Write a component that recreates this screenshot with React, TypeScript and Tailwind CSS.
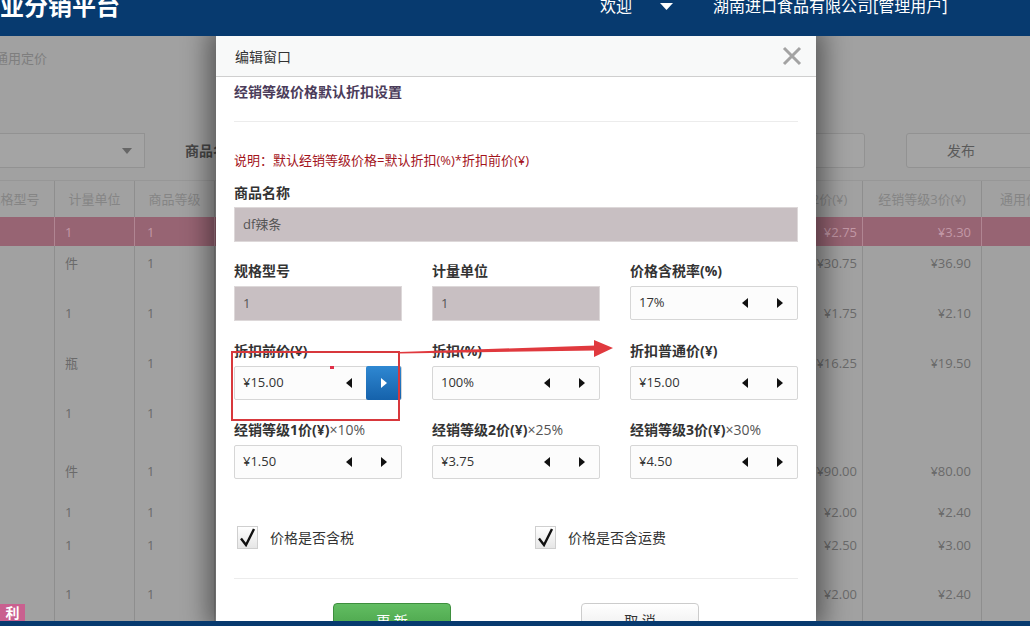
import React from "react";

const rows = [
  { h: 29, u: "1", g: "1", a: "¥2.75", b: "¥3.30", hl: true },
  { h: 50, u: "件", g: "1", a: "¥30.75", b: "¥36.90" },
  { h: 50, u: "1", g: "1", a: "¥1.75", b: "¥2.10" },
  { h: 50, u: "瓶", g: "1", a: "¥16.25", b: "¥19.50" },
  { h: 58, u: "1", g: "1", a: "", b: "" },
  { h: 41, u: "件", g: "1", a: "¥90.00", b: "¥80.00" },
  { h: 33, u: "1", g: "1", a: "¥2.00", b: "¥2.40" },
  { h: 49, u: "1", g: "1", a: "¥2.50", b: "¥3.00" },
  { h: 49, u: "1", g: "1", a: "¥2.00", b: "¥2.40" },
];

function Tri({ dir, color = "#111" }: { dir: "left" | "right"; color?: string }) {
  return (
    <svg width="6" height="10" viewBox="0 0 6 10">
      <path d={dir === "left" ? "M6 0 L0 5 L6 10Z" : "M0 0 L6 5 L0 10Z"} fill={color} />
    </svg>
  );
}

function Spinner({ value, active }: { value: string; active?: boolean }) {
  return (
    <div className="flex h-[34px] items-center rounded-[2px] border border-[#d6d6d6] bg-[#fcfcfc]">
      <span className="flex-1 pl-[8px] text-[13px] text-[#333]">{value}</span>
      <span className="flex h-full w-[35px] items-center justify-center">
        <Tri dir="left" />
      </span>
      {active ? (
        <span className="flex h-[34px] w-[35px] items-center justify-center rounded-[2px] bg-linear-to-b from-[#2f88d2] to-[#1562ab]">
          <Tri dir="right" color="#fff" />
        </span>
      ) : (
        <span className="flex h-full w-[35px] items-center justify-center">
          <Tri dir="right" />
        </span>
      )}
    </div>
  );
}

function Disabled({ value }: { value: string }) {
  return (
    <div className="flex h-[35px] items-center border border-[#ddd8d9] bg-[#c8bfc2] pl-[8px] text-[13px] text-[#555]">
      {value}
    </div>
  );
}

function Label({ children }: { children: React.ReactNode }) {
  return <div className="h-[20px] text-[14px] leading-[20px] font-bold text-[#333]">{children}</div>;
}

function Check({ label }: { label: string }) {
  return (
    <div className="flex items-center gap-[12px]">
      <div className="flex h-[23px] w-[21px] items-center justify-center border border-[#cfcfcf] bg-linear-to-b from-white to-[#e6e6e6]">
        <svg width="17" height="19" viewBox="0 0 17 19">
          <path d="M2 10.5 L7 17 L15 1" fill="none" stroke="#111" strokeWidth="2.4" />
        </svg>
      </div>
      <span className="text-[14px] text-[#333]">{label}</span>
    </div>
  );
}

function Modal() {
  return (
    <div className="absolute top-0 left-[216px] h-[585px] w-[600px] overflow-hidden bg-white shadow-[0_0_24px_8px_rgba(0,0,0,0.45)] font-['Open_Sans','Noto_Sans_CJK_SC',sans-serif]">
      {/* title bar */}
      <div className="flex h-[41px] items-center justify-between border-b border-[#cfcfcf] bg-[#f8f9f9] pr-[14px] pl-[19px]">
        <span className="text-[14px] text-[#333]">编辑窗口</span>
        <svg width="20" height="20" viewBox="0 0 20 20">
          <path d="M2 2 L18 18 M18 2 L2 18" stroke="#a3a3a3" strokeWidth="3" />
        </svg>
      </div>

      <div className="px-[18px]">
        <div className="mt-[5px] h-[20px] text-[14px] leading-[20px] font-bold text-[#4b3c5a]">经销等级价格默认折扣设置</div>
        <div className="mt-[19px] h-px bg-[#ececec]" />
        <div className="mt-[29px] h-[18px] text-[13px] leading-[18px] text-[#a3141c]">
          说明：默认经销等级价格=默认折扣(%)*折扣前价(¥)
        </div>

        <div className="mt-[14px]">
          <Label>商品名称</Label>
          <div className="mt-[4px]">
            <Disabled value="df辣条" />
          </div>
        </div>

        <div className="grid grid-cols-3 gap-x-[30px]">
          <div className="mt-[19px]">
            <Label>规格型号</Label>
            <div className="mt-[5px]"><Disabled value="1" /></div>
          </div>
          <div className="mt-[19px]">
            <Label>计量单位</Label>
            <div className="mt-[5px]"><Disabled value="1" /></div>
          </div>
          <div className="mt-[19px]">
            <Label>价格含税率(%)</Label>
            <div className="mt-[5px]"><Spinner value="17%" /></div>
          </div>

          <div className="mt-[20px]">
            <Label>折扣前价(¥)</Label>
            <div className="mt-[5px]"><Spinner value="¥15.00" active /></div>
          </div>
          <div className="mt-[20px]">
            <Label>折扣(%)</Label>
            <div className="mt-[5px]"><Spinner value="100%" /></div>
          </div>
          <div className="mt-[20px]">
            <Label>折扣普通价(¥)</Label>
            <div className="mt-[5px]"><Spinner value="¥15.00" /></div>
          </div>

          <div className="mt-[20px]">
            <Label>经销等级1价(¥)<span className="font-normal text-[#555]">×10%</span></Label>
            <div className="mt-[5px]"><Spinner value="¥1.50" /></div>
          </div>
          <div className="mt-[20px]">
            <Label>经销等级2价(¥)<span className="font-normal text-[#555]">×25%</span></Label>
            <div className="mt-[5px]"><Spinner value="¥3.75" /></div>
          </div>
          <div className="mt-[20px]">
            <Label>经销等级3价(¥)<span className="font-normal text-[#555]">×30%</span></Label>
            <div className="mt-[5px]"><Spinner value="¥4.50" /></div>
          </div>
        </div>

        <div className="mt-[47px] flex">
          <div className="ml-[3px] w-[298px]">
            <Check label="价格是否含税" />
          </div>
          <Check label="价格是否含运费" />
        </div>

        <div className="mt-[29px] h-px bg-[#ececec]" />

        <div className="mt-[24px] flex justify-center gap-[130px]">
          <button className="h-[34px] w-[118px] rounded-[4px] border border-[#3e8f3e] bg-linear-to-b from-[#62bd62] to-[#449d44] text-[14px] text-white">
            更 新
          </button>
          <button className="h-[34px] w-[118px] rounded-[4px] border border-[#ccc] bg-linear-to-b from-white to-[#eaeaea] text-[14px] text-[#333]">
            取 消
          </button>
        </div>
      </div>

      {/* annotations drawn on the screenshot */}
      <div className="absolute top-[315px] left-[15px] h-[70px] w-[169px] border-2 border-[#d8383c]" />
      <div className="absolute top-[330px] left-[114px] h-[3px] w-[4px] bg-[#e03048]" />
      <svg className="absolute top-[300px] left-[181px]" width="220" height="25" viewBox="0 0 220 25">
        <path d="M2 16 L199 9.5 L199 14.5 L2 17.5Z" fill="#e0393e" />
        <path d="M197 4 L216 12 L197 21Z" fill="#e0393e" />
      </svg>
    </div>
  );
}

export default function App() {
  const cell = "shrink-0 border-r border-[#8e8e8e]";
  return (
    <div className="relative h-[626px] w-[1030px] overflow-hidden bg-[#a2a2a2] font-['Open_Sans','Noto_Sans_CJK_SC',sans-serif]">
      {/* top bar */}
      <div className="flex h-[36px] overflow-hidden bg-[#073a6f] text-white">
        <div className="-mt-[7px] w-[600px] text-[24px] leading-[26px] font-bold">业分销平台</div>
        <div className="-mt-[4px] flex h-[20px] items-center text-[16px] leading-[20px]">
          <span>欢迎</span>
          <svg className="ml-[28px]" width="13" height="7" viewBox="0 0 13 7">
            <path d="M0 0 L13 0 L6.5 7Z" fill="#fff" />
          </svg>
          <span className="ml-[40px]">湖南进口食品有限公司[管理用户]</span>
        </div>
      </div>

      {/* page behind the dialog, dimmed by the overlay */}
      <div className="relative h-[585px] overflow-hidden bg-[#a1a1a1]">
        <div className="-ml-[5px] h-[97px] pt-[13px] text-[13px] leading-[18px] text-[#7e7e7e]">通用定价</div>

        <div className="flex h-[35px] items-stretch">
          <div className="-ml-[20px] flex w-[165px] shrink-0 items-center justify-end border border-[#929292] bg-[#a4a4a4] pr-[12px]">
            <svg width="10" height="6" viewBox="0 0 10 6">
              <path d="M0 0 L10 0 L5 6Z" fill="#666" />
            </svg>
          </div>
          <div className="flex w-[545px] shrink-0 items-center pl-[40px] text-[14px] font-bold text-[#474747]">商品名称</div>
          <div className="w-[175px] shrink-0 rounded-[3px] border border-[#929292] bg-[#a4a4a4]" />
          <div className="ml-[41px] flex w-[140px] shrink-0 items-center rounded-[3px] border border-[#929292] bg-[#a4a4a4] pl-[40px] text-[14px] text-[#5a5a5a]">
            发布
          </div>
        </div>

        <div className="mt-[12px] border-t border-[#979797] text-[13px] leading-[18px] text-[#6a6a6a]">
          <div className="flex h-[36px] items-center text-[#858585]">
            <div className={`${cell} -ml-[27px] flex h-full w-[82px] items-center justify-center`}>规格型号</div>
            <div className={`${cell} flex h-full w-[80px] items-center justify-center`}>计量单位</div>
            <div className={`${cell} flex h-full w-[80px] items-center justify-center`}>商品等级</div>
            <div className={`${cell} h-full w-[530px]`} />
            <div className={`${cell} flex h-full w-[118px] items-center justify-center`}>经销等级2价(¥)</div>
            <div className={`${cell} flex h-full w-[119px] items-center justify-center`}>经销等级3价(¥)</div>
            <div className="flex h-full w-[90px] shrink-0 items-center justify-center">通用价(¥)</div>
          </div>
          {rows.map((r, i) => {
            const c = r.hl ? "shrink-0 border-r border-[#b08592]" : cell;
            const box = r.hl ? "flex items-center" : "pt-[8px]";
            return (
              <div
                key={i}
                className={r.hl ? "flex bg-[#976473] text-[#c298a6]" : "flex"}
                style={{ height: r.h }}
              >
                <div className={`${c} ${box} -ml-[27px] w-[82px]`} />
                <div className={`${c} ${box} w-[80px] pl-[10px]`}>{r.u}</div>
                <div className={`${c} ${box} w-[80px] pl-[12px]`}>{r.g}</div>
                <div className={`${c} w-[530px]`} />
                <div className={`${c} ${box} w-[118px] justify-end pr-[5px] text-right`}>{r.a}</div>
                <div className={`${c} ${box} w-[119px] justify-end pr-[10px] text-right`}>{r.b}</div>
                <div className="w-[90px] shrink-0" />
              </div>
            );
          })}
        </div>

        <div className="absolute bottom-0 left-0 flex h-[17px] w-[25px] items-center justify-center bg-[#c9608f] text-[14px] font-bold text-white">
          利
        </div>

        <Modal />
      </div>

      <div className="h-[5px] bg-[#073a6f]" />
    </div>
  );
}
